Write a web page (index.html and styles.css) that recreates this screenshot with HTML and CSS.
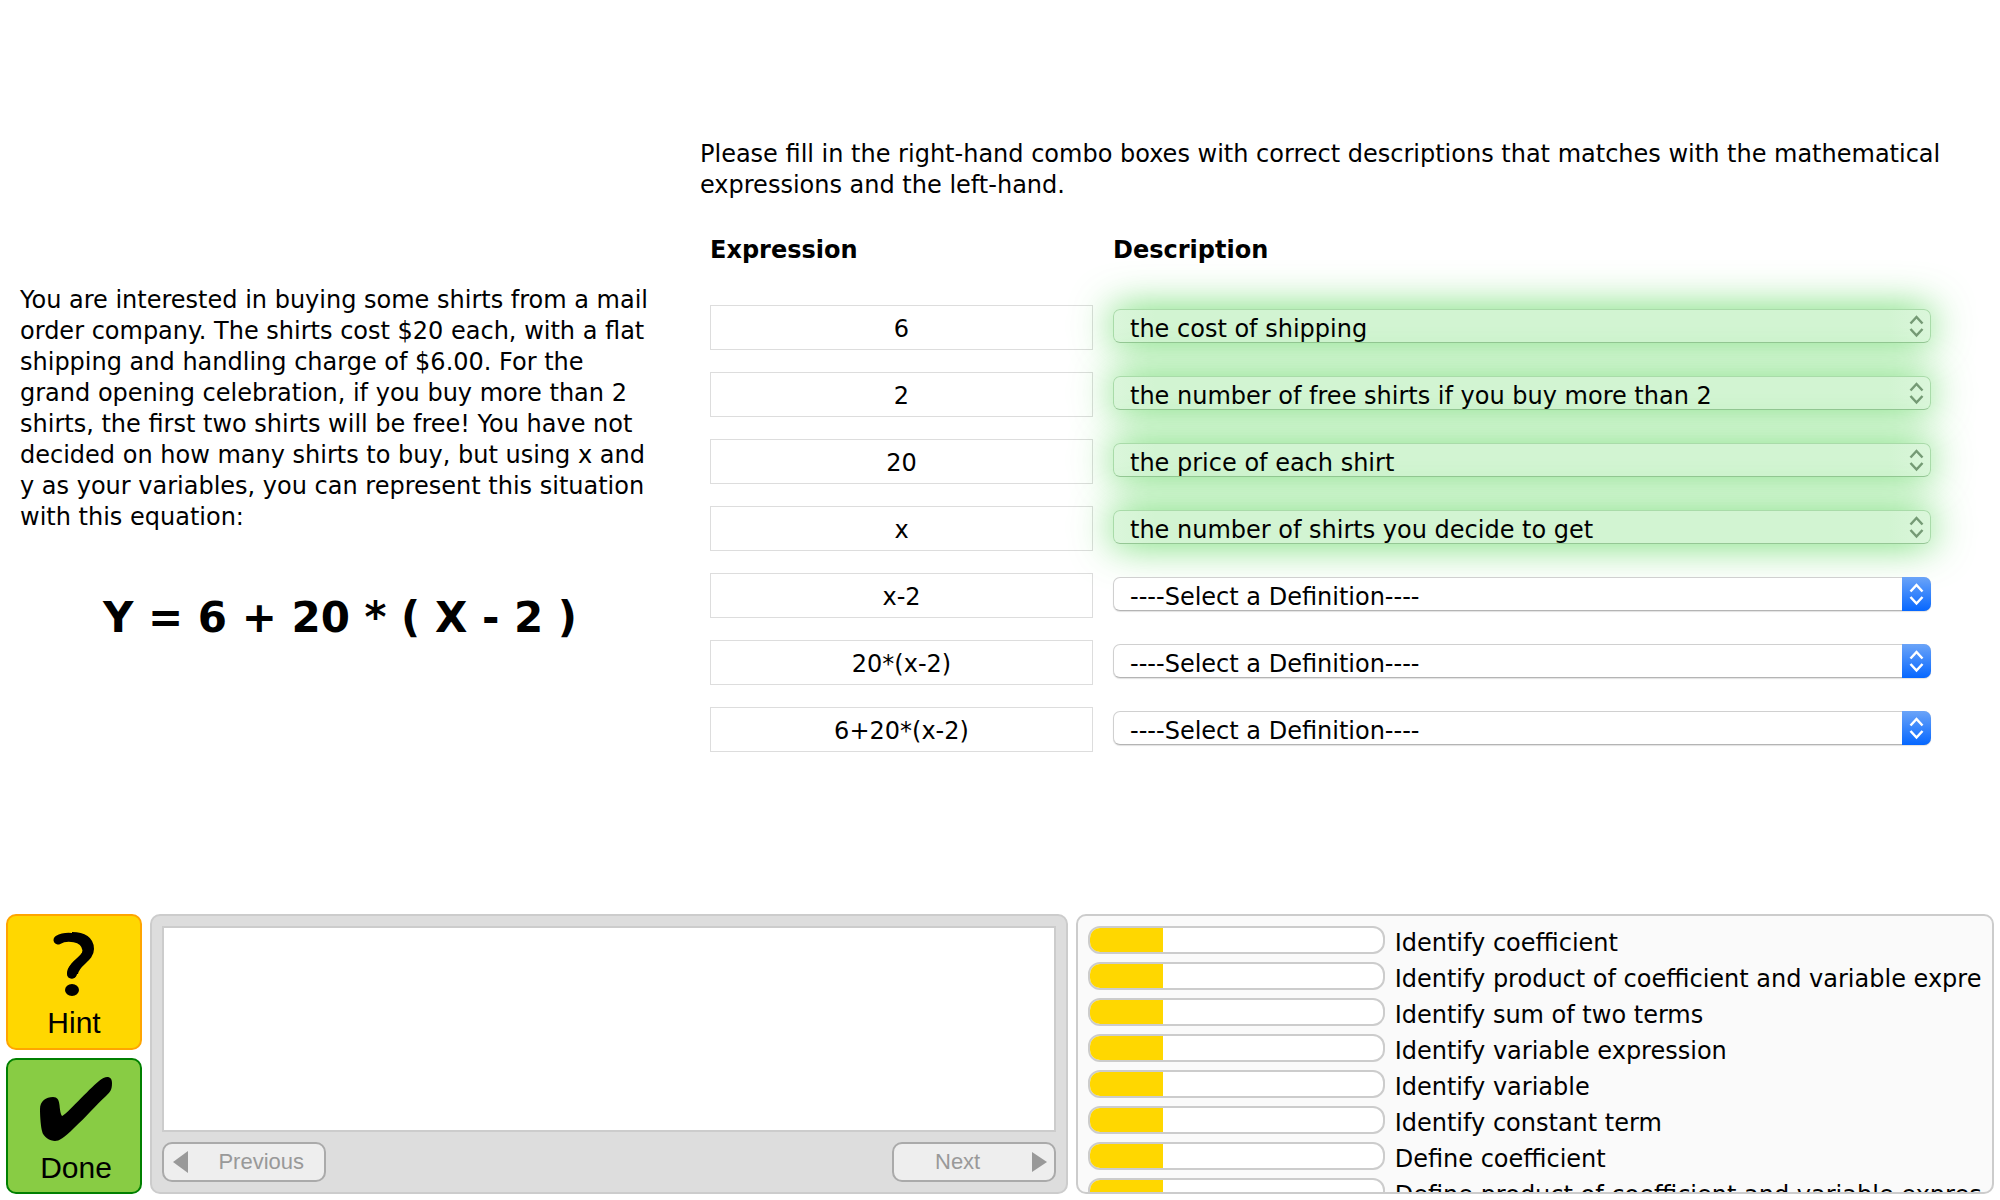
FILE: index.html
```html
<!DOCTYPE html>
<html lang="en">
<head>
<meta charset="utf-8">
<title>Shirt order expressions</title>
<link rel="stylesheet" href="styles.css">
</head>
<body>
<svg class="symbols" aria-hidden="true">
  <symbol id="chevrons" viewBox="0 0 29 34">
    <path d="M8.500 14.500l6-6.500 6 6.500M8.500 20l6 6.500 6-6.500" fill="none" stroke="currentColor" stroke-width="2.500"/>
  </symbol>
</svg>

<main class="problem">
  <section class="story">
    <p>You are interested in buying some shirts from a mail order company. The shirts cost $20 each, with a flat shipping and handling charge of $6.00. For the grand opening celebration, if you buy more than 2 shirts, the first two shirts will be free! You have not decided on how many shirts to buy, but using x and y as your variables, you can represent this situation with this equation:</p>
    <h1 class="equation">Y = 6 + 20 * ( X - 2 )</h1>
  </section>

  <section class="work">
    <p>Please fill in the right-hand combo boxes with correct descriptions that matches with the mathematical expressions and the left-hand.</p>
    <table class="answers">
      <thead>
        <tr><th class="col-expression" scope="col">Expression</th><th scope="col">Description</th></tr>
      </thead>
      <tbody>
        <tr>
          <td><input class="expression" aria-label="Expression 1" value="6" readonly></td>
          <td><div class="combo correct"><select aria-label="Description of 6"><option>the cost of shipping</option></select><svg><use href="#chevrons"/></svg></div></td>
        </tr>
        <tr>
          <td><input class="expression" aria-label="Expression 2" value="2" readonly></td>
          <td><div class="combo correct"><select aria-label="Description of 2"><option>the number of free shirts if you buy more than 2</option></select><svg><use href="#chevrons"/></svg></div></td>
        </tr>
        <tr>
          <td><input class="expression" aria-label="Expression 3" value="20" readonly></td>
          <td><div class="combo correct"><select aria-label="Description of 20"><option>the price of each shirt</option></select><svg><use href="#chevrons"/></svg></div></td>
        </tr>
        <tr>
          <td><input class="expression" aria-label="Expression 4" value="x" readonly></td>
          <td><div class="combo correct"><select aria-label="Description of x"><option>the number of shirts you decide to get</option></select><svg><use href="#chevrons"/></svg></div></td>
        </tr>
        <tr>
          <td><input class="expression" aria-label="Expression 5" value="x-2" readonly></td>
          <td><div class="combo"><select aria-label="Description of x-2"><option>----Select a Definition----</option></select><svg><use href="#chevrons"/></svg></div></td>
        </tr>
        <tr>
          <td><input class="expression" aria-label="Expression 6" value="20*(x-2)" readonly></td>
          <td><div class="combo"><select aria-label="Description of 20*(x-2)"><option>----Select a Definition----</option></select><svg><use href="#chevrons"/></svg></div></td>
        </tr>
        <tr>
          <td><input class="expression" aria-label="Expression 7" value="6+20*(x-2)" readonly></td>
          <td><div class="combo"><select aria-label="Description of 6+20*(x-2)"><option>----Select a Definition----</option></select><svg><use href="#chevrons"/></svg></div></td>
        </tr>
      </tbody>
    </table>
  </section>
</main>

<footer class="toolbar">
  <div class="actions">
    <button class="action hint" type="button">
      <svg viewBox="0 0 72 64" aria-hidden="true">
        <path d="M20 8C27 4 47 3 49 18C50 28 35 30 34 42" fill="none" stroke="#000" stroke-width="9" stroke-linecap="round"/>
        <path d="M34 1C46 1 55 6 55 17C55 29 40 32 39 42" fill="none" stroke="#000" stroke-width="2"/>
        <path d="M34 1C46 1 55 6 55 17C55 29 40 32 39 42C38 48 29 48 29 42C29 30 45 26 45 17C45 11 40 8 34 8Z"/>
        <ellipse cx="34" cy="58" rx="7" ry="6"/>
      </svg>
      <span>Hint</span>
    </button>
    <button class="action done" type="button">
      <svg viewBox="0 0 72 64" aria-hidden="true">
        <path d="M0 32C0 24 6 20 13 20C22 20 18 32 22 39C25 39 49 12 59 4C66-2 72-1 72 6C72 13 70 15 66 19C56 28 46 40 34 51C24 61 19 64 15 64C10 64 3 60 2 54C1 50 0 41 0 32Z"/>
      </svg>
      <span>Done</span>
    </button>
  </div>

  <section class="messages" aria-label="Hint messages">
    <div class="message-text"></div>
    <div class="message-nav">
      <button class="nav" type="button" disabled>
        <svg viewBox="0 0 15 22" aria-hidden="true"><path d="M15 0v22L0 11z"/></svg>
        <span>Previous</span>
      </button>
      <button class="nav" type="button" disabled>
        <span>Next</span>
        <svg viewBox="0 0 15 22" aria-hidden="true"><path d="M0 1l15 10L0 21z"/></svg>
      </button>
    </div>
  </section>

  <section class="skills" aria-label="Skills">
    <ul>
      <li><div class="bar"><div class="fill" style="width:25%"></div></div><span>Identify coefficient</span></li>
      <li><div class="bar"><div class="fill" style="width:25%"></div></div><span>Identify product of coefficient and variable expression</span></li>
      <li><div class="bar"><div class="fill" style="width:25%"></div></div><span>Identify sum of two terms</span></li>
      <li><div class="bar"><div class="fill" style="width:25%"></div></div><span>Identify variable expression</span></li>
      <li><div class="bar"><div class="fill" style="width:25%"></div></div><span>Identify variable</span></li>
      <li><div class="bar"><div class="fill" style="width:25%"></div></div><span>Identify constant term</span></li>
      <li><div class="bar"><div class="fill" style="width:25%"></div></div><span>Define coefficient</span></li>
      <li><div class="bar"><div class="fill" style="width:25%"></div></div><span>Define product of coefficient and variable expression</span></li>
    </ul>
  </section>
</footer>
</body>
</html>
```
FILE: styles.css
```css
* { box-sizing: border-box; }

body {
  margin: 0;
  min-height: 100vh;
  display: flex;
  flex-direction: column;
  background: #fff;
  color: #000;
  font: 24px/31px Verdana, "DejaVu Sans", sans-serif;
}

p, h1, ul { margin: 0; padding: 0; }
button, input, select { font: inherit; color: inherit; margin: 0; }
.symbols { display: none; }

/* Problem statement and answer table */
.problem {
  flex: 1;
  display: grid;
  grid-template-columns: 640fr 1250fr;
  gap: 40px;
  padding: 139px 50px 40px 20px;
}
.story { padding-top: 146px; }
.equation {
  margin-top: 60px;
  font-size: 42px;
  line-height: 50px;
  text-align: center;
}

.answers {
  width: calc(100% - 9px);
  margin-top: 34px;
  border-collapse: collapse;
  table-layout: fixed;
}
.answers th {
  height: 59px;
  padding: 0 10px;
  text-align: left;
  vertical-align: top;
}
.answers td { height: 67px; padding: 0 10px; }
.col-expression { width: 403px; }

.expression {
  display: block;
  width: 100%;
  height: 45px;
  padding: 2px 0 0;
  border: 1px solid #ddd;
  background: transparent;
  text-align: center;
}

.combo { display: grid; color: #fff; padding-bottom: 3px; }
.combo select, .combo svg { grid-area: 1 / 1; }
.combo select {
  appearance: none;
  width: 100%;
  height: 34px;
  padding: 4px 40px 0 16px;
  border: 1px solid #d0d0d0;
  border-bottom-color: #b4b4b4;
  border-radius: 7px;
  background: #fff;
  box-shadow: 0 1px 1px rgba(0, 0, 0, .12);
  color: #000;
}
.combo svg {
  justify-self: end;
  width: 29px;
  height: 34px;
  border-radius: 0 7px 7px 0;
  background: linear-gradient(#6ba4f8, #0667ff);
  pointer-events: none;
}
.correct { color: #759a75; }
.correct select {
  border-color: #a9dba9;
  border-bottom-color: #95c795;
  background: linear-gradient(90deg, #dbf6db, #d2f4d2 5%, #d2f4d2 95%, #dbf6db);
  box-shadow: 0 0 40px rgba(50, 205, 50, .75);
}
.correct svg { background: none; }

/* Bottom toolbar */
.toolbar {
  display: grid;
  grid-template-columns: 136px 1fr 1fr;
  gap: 8px;
  height: 286px;
  padding: 0 6px 6px;
}
.actions { display: grid; gap: 8px; }
.action {
  display: flex;
  flex-direction: column;
  align-items: center;
  gap: 10px;
  padding: 16px 0 0;
  border: 2px solid orange;
  border-radius: 10px;
  background: gold;
  font: 30px/34px Arial, "Liberation Sans", sans-serif;
}
.action svg { width: 72px; height: 64px; overflow: visible; }
.done { padding: 17px 0 0 4px; border-color: green; background: #8c4; }

.messages {
  display: flex;
  flex-direction: column;
  gap: 10px;
  padding: 10px;
  border: 2px solid #ccc;
  border-radius: 10px;
  background: #ddd;
}
.message-text { flex: 1; border: 2px solid #ccc; background: #fff; }
.message-nav { display: flex; justify-content: space-between; }
.nav {
  display: flex;
  align-items: center;
  justify-content: space-between;
  width: 164px;
  height: 40px;
  padding: 0 20px 0 9px;
  border: 2px solid #aaa;
  border-radius: 10px;
  background: #eee;
  color: #999;
  font: 22px/26px Arial, "Liberation Sans", sans-serif;
}
.nav:last-child { padding: 0 7px 0 41px; }
.nav svg { width: 15px; height: 22px; fill: currentColor; }

.skills {
  min-width: 0;
  padding: 10px 10px 0;
  border: 2px solid #ccc;
  border-radius: 10px;
  background: #fafafa;
  overflow: hidden;
}
.skills ul { list-style: none; }
.skills li {
  display: grid;
  grid-template-columns: 1fr 2fr;
  gap: 10px;
  height: 36px;
  white-space: nowrap;
}
.skills span { min-width: 0; padding: 2px 0 0 2px; overflow: hidden; }
.bar {
  height: 28px;
  margin-right: -2px;
  border: 2px solid #ccc;
  border-radius: 12px;
  background: #fff;
  overflow: hidden;
}
.fill { height: 100%; background: gold; }
```
